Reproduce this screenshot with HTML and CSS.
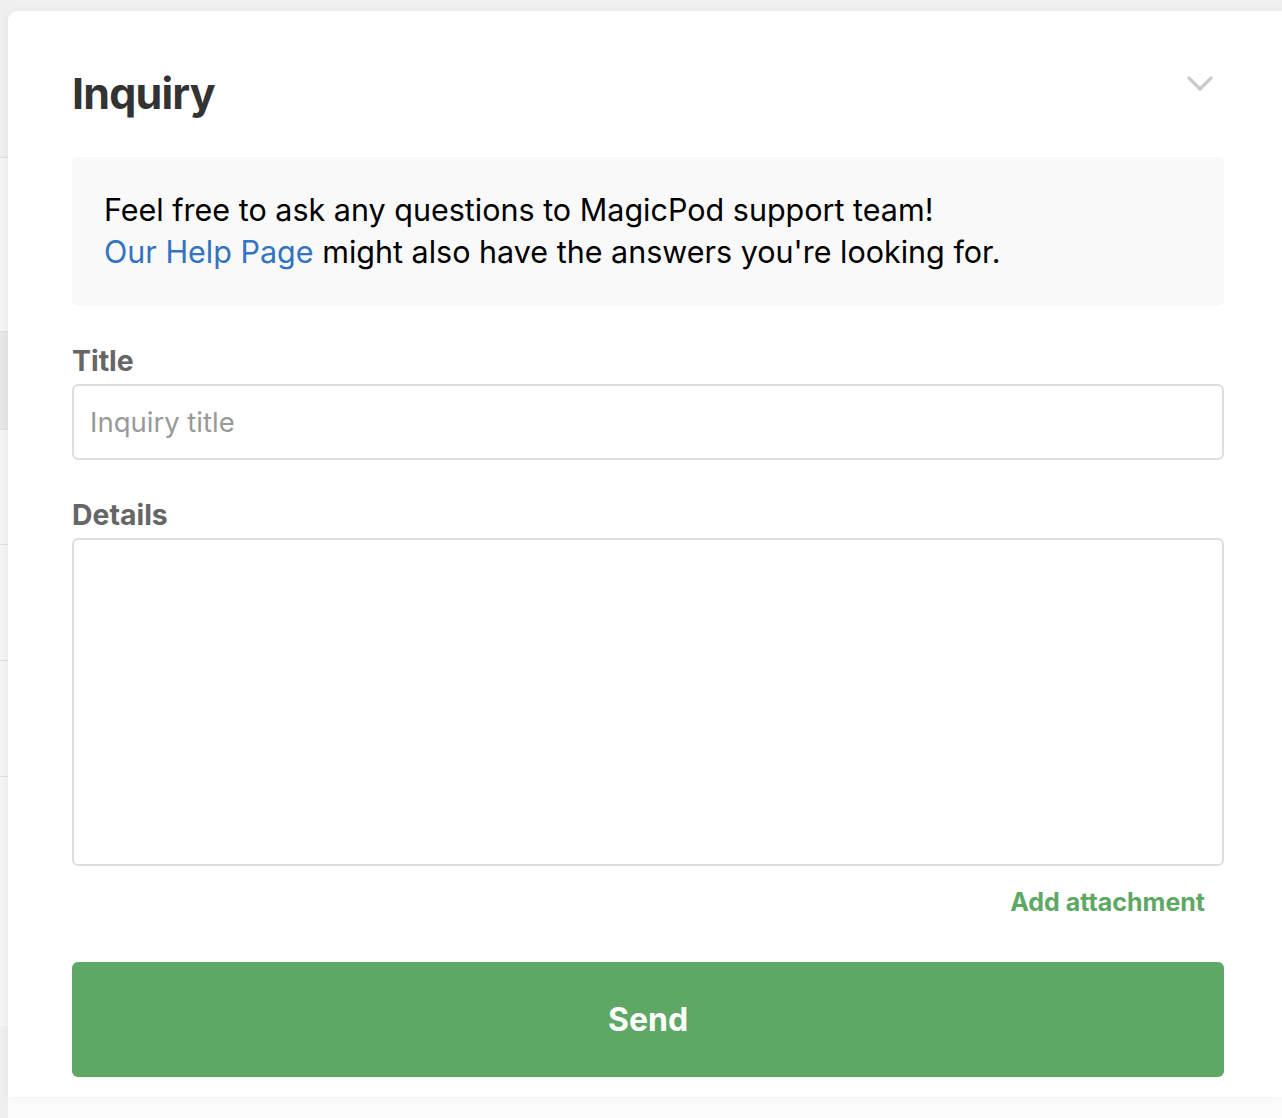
FILE: index.html
```html
<!DOCTYPE html>
<html lang="en">
<head>
<meta charset="utf-8">
<title>Inquiry</title>
<link rel="stylesheet" href="styles.css">
</head>
<body>
<div class="page">
  <aside class="sidebar">
    <div class="side-row side-top"></div>
    <div class="side-row side-a"></div>
    <div class="side-row side-active"></div>
    <div class="side-row side-b"></div>
    <div class="side-row side-c"></div>
    <div class="side-row side-d"></div>
    <div class="side-row side-e"></div>
    <div class="side-row side-bottom"></div>
  </aside>
  <main class="main">
    <div class="main-top"></div>
    <div class="main-rest"></div>
  </main>
</div>

<section class="panel">
  <header class="panel-header">
    <h1 class="panel-title">Inquiry</h1>
    <button class="collapse" aria-label="Collapse">
      <svg width="28" height="18" viewBox="0 0 28 18"><path d="M3 3 L14 14 L25 3" fill="none" stroke="#cccccc" stroke-width="3.4" stroke-linecap="round" stroke-linejoin="round"/></svg>
    </button>
  </header>

  <div class="info">
    <p>Feel free to ask any questions to MagicPod support team!<br><a href="#" class="help-link">Our Help Page</a> might also have the answers you're looking for.</p>
  </div>

  <form class="form">
    <label class="field-label" for="title">Title</label>
    <input class="input" id="title" type="text" placeholder="Inquiry title">

    <label class="field-label details-label" for="details">Details</label>
    <textarea class="textarea" id="details"></textarea>

    <div class="attach-row"><a href="#" class="attach">Add attachment</a></div>

    <button type="button" class="send">Send</button>
  </form>
</section>
</body>
</html>
```

FILE: styles.css
```css
* { box-sizing: border-box; }
html, body { margin: 0; padding: 0; }
body {
  width: 1282px;
  height: 1118px;
  overflow: hidden;
  font-family: Inter, "Noto Sans", sans-serif;
  position: relative;
}
.page {
  display: flex;
  height: 1118px;
}
.sidebar {
  width: 8px;
  display: flex;
  flex-direction: column;
}
.side-row { border-bottom: 1px solid #e2e2e2; background: #f4f4f4; }
.side-top { height: 158px; background: #efefef; }
.side-a { height: 174px; }
.side-active { height: 98px; background: #e7e7e7; }
.side-b { height: 115px; }
.side-c { height: 116px; }
.side-d { height: 116px; }
.side-e { height: 249px; border-bottom: none; }
.side-bottom { flex: 1; background: #efefef; border-bottom: none; }
.main { flex: 1; display: flex; flex-direction: column; }
.main-top { height: 60px; background: #f0f0f0; }
.main-rest { flex: 1; background: #fcfcfc; }

.panel {
  position: absolute;
  left: 8px;
  top: 11px;
  right: 0;
  height: 1086px;
  background: #fff;
  border-radius: 9px 0 0 0;
  box-shadow: 0 0 10px rgba(0,0,0,0.06);
  padding: 56px 58px 0 64px;
}
.panel-header {
  display: flex;
  justify-content: space-between;
  align-items: flex-start;
  height: 90px;
}
.panel-title {
  margin: 0;
  font-size: 43px;
  line-height: 53px;
  font-weight: 700;
  color: #333;
  letter-spacing: -0.8px;
}
.collapse {
  border: none;
  background: none;
  padding: 0;
  margin: 8px 10px 0 0;
  width: 28px;
  height: 18px;
  display: block;
}
.collapse svg { display: block; }

.info {
  background: #f9f9f9;
  border-radius: 6px;
  padding: 32px 32px;
  height: 149px;
}
.info p {
  margin: 0;
  font-size: 30.5px;
  line-height: 42px;
  color: #000;
}
.help-link { color: #3273c2; text-decoration: none; }

.form { display: flex; flex-direction: column; }
.field-label {
  font-size: 28.4px;
  line-height: 34px;
  font-weight: 700;
  color: #666;
  margin-top: 38px;
  margin-bottom: 6px;
}
.input {
  height: 76px;
  border: 2px solid #dedede;
  border-radius: 6px;
  padding: 0 16px;
  font-family: inherit;
  font-size: 27.5px;
  color: #333;
  outline: none;
}
.input::placeholder { color: #999; }
.textarea {
  height: 328px;
  border: 2px solid #dedede;
  border-radius: 6px;
  resize: none;
  font-family: inherit;
  font-size: 27px;
  outline: none;
}
.attach-row {
  display: flex;
  justify-content: flex-end;
  padding-right: 19px;
  margin-top: 20px;
}
.attach {
  font-size: 25px;
  line-height: 32px;
  font-weight: 700;
  color: #5ea864;
  text-decoration: none;
}
.send {
  margin-top: 44px;
  height: 115px;
  border: none;
  border-radius: 6px;
  background: #5ea764;
  color: #fff;
  font-family: inherit;
  font-size: 32px;
  font-weight: 700;
}
```
